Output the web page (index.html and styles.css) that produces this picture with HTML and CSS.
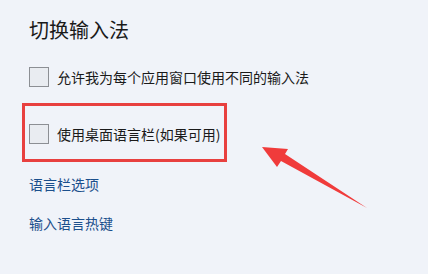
FILE: index.html
```html
<!DOCTYPE html>
<html lang="zh-CN">
<head>
<meta charset="utf-8">
<link rel="stylesheet" href="styles.css">
</head>
<body>
<div class="page">
  <h1 class="title">切换输入法</h1>
  <div class="row first">
    <span class="check"></span>
    <span class="label">允许我为每个应用窗口使用不同的输入法</span>
  </div>
  <div class="highlight">
    <div class="row">
      <span class="check"></span>
      <span class="label">使用桌面语言栏(如果可用)</span>
    </div>
  </div>
  <a class="link link-one">语言栏选项</a>
  <a class="link link-two">输入语言热键</a>
  <svg class="arrow" width="428" height="274" viewBox="0 0 428 274">
    <polygon points="262,147 288,149 285,154 367,208 281,161 277,167" fill="#f03b3b"/>
  </svg>
</div>
</body>
</html>
```

FILE: styles.css
```css
html, body {
  margin: 0;
  padding: 0;
  background: #f0f3f9;
}
.page {
  position: relative;
  width: 428px;
  height: 274px;
  box-sizing: border-box;
  padding-left: 29px;
  padding-top: 16px;
  display: flex;
  flex-direction: column;
  align-items: flex-start;
  font-family: "Noto Sans CJK SC", "Noto Sans", sans-serif;
  color: #1a1a1a;
  overflow: hidden;
}
.title {
  margin: 0;
  font-size: 20px;
  font-weight: normal;
  line-height: 28px;
  height: 28px;
}
.row {
  display: flex;
  align-items: center;
  gap: 8px;
  height: 20px;
}
.row.first {
  margin-top: 23px;
}
.check {
  width: 20px;
  height: 20px;
  box-sizing: border-box;
  border: 1px solid #8c8f94;
  background: #e9ecf1;
  flex: none;
}
.label {
  font-size: 14px;
  line-height: 20px;
}
.highlight {
  margin-top: 16px;
  margin-left: -7px;
  width: 205px;
  box-sizing: border-box;
  border: 3px solid #e8403f;
  padding: 18px 0 15px 4px;
}
.link {
  font-size: 14px;
  line-height: 20px;
  color: #1b4f8c;
  text-decoration: none;
}
.link-one {
  margin-top: 12px;
}
.link-two {
  margin-top: 19px;
}
.arrow {
  position: absolute;
  left: 0;
  top: 0;
}
```
